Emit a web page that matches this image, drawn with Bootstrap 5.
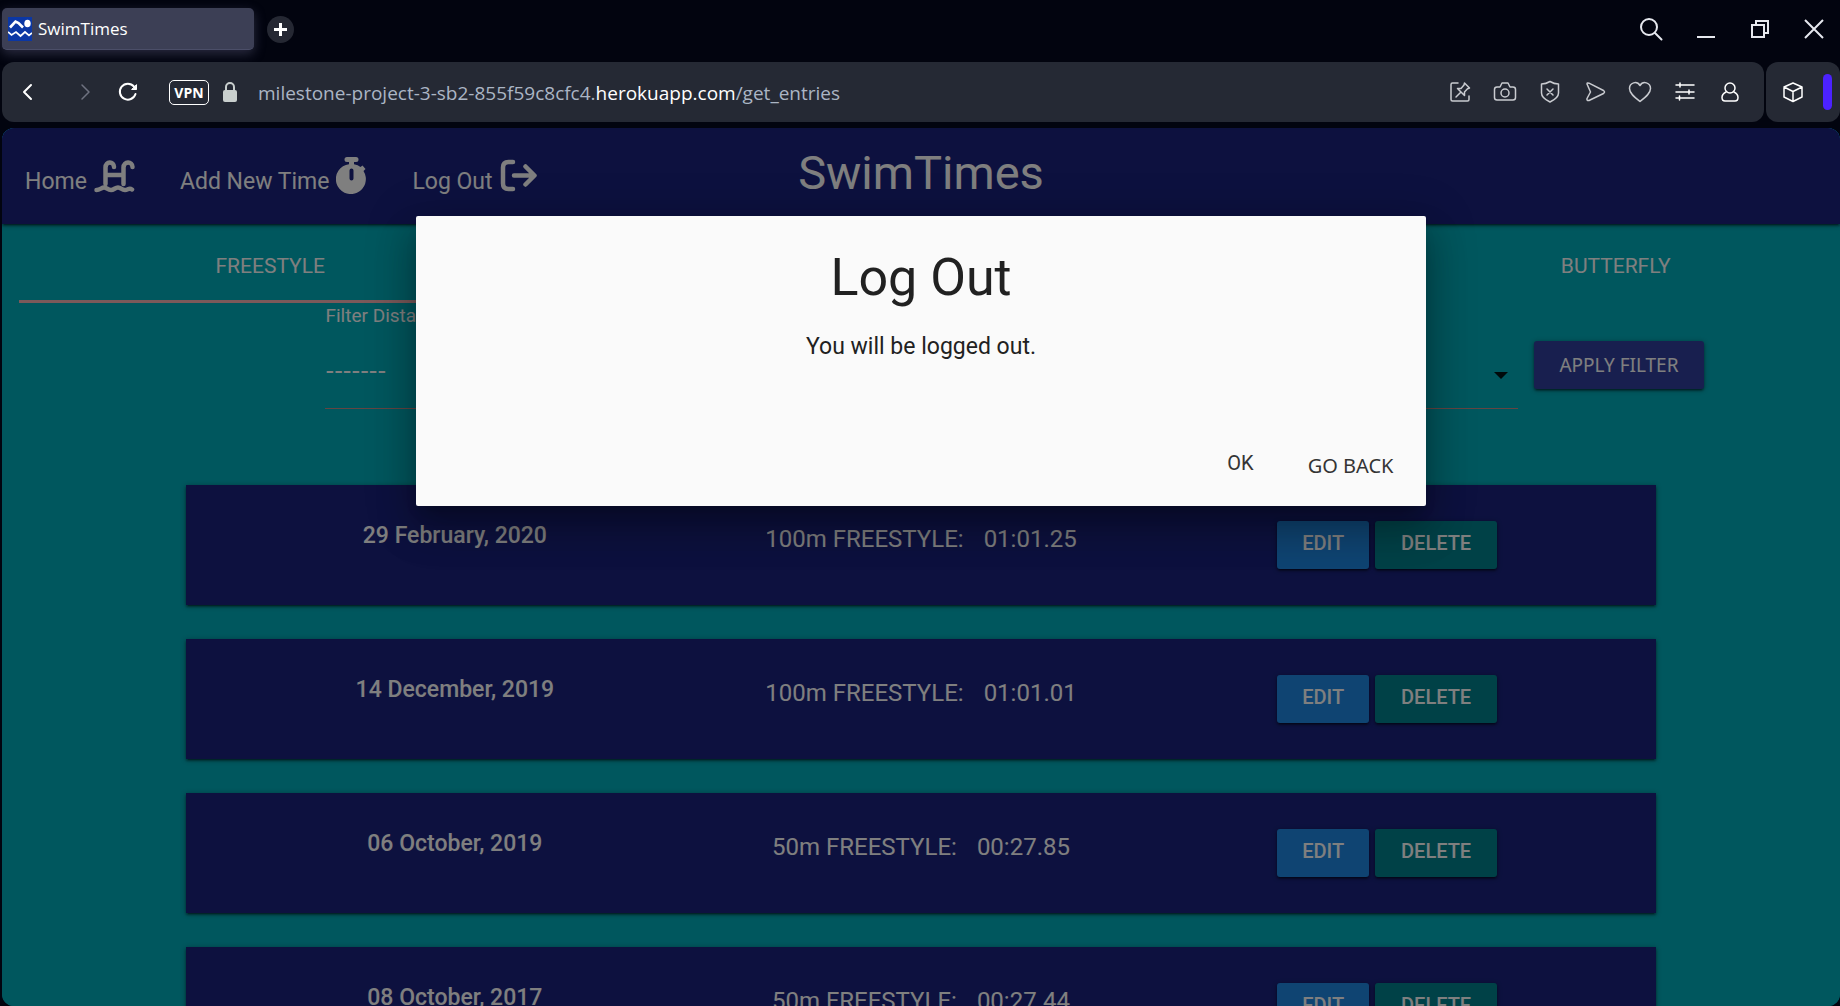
<!DOCTYPE html>
<html lang="en">
<head>
<meta charset="utf-8">
<meta name="viewport" content="width=device-width, initial-scale=1">
<title>SwimTimes</title>
<link href="https://cdn.jsdelivr.net/npm/bootstrap@5.3.0/dist/css/bootstrap.min.css" rel="stylesheet">
<style>
  body { background: #02040f; font-family: "Open Sans", "Noto Sans", sans-serif; }
  button, a { color: inherit; text-decoration: none; }
  svg { display: block; flex: none; }
  .line-icon { fill: none; stroke: currentColor; stroke-width: 1.5; stroke-linecap: round; stroke-linejoin: round; }
  .heavy { stroke-width: 2; }
  .bare { background: none; border: 0; padding: 0; }

  /* browser window */
  .title-bar { height: 62px; padding: 8px 15px 12px 2px; color: #e6e8ee; }
  .page-tab { width: 252px; height: 42px; padding-left: 6px; gap: 6px; border-radius: 5px; background: #3c3f55; border-bottom: 1px solid #4b4e68; box-shadow: 0 4px 12px rgba(90, 92, 125, .45); font-size: 17px; color: #fff; }
  .new-tab { width: 27px; height: 27px; margin-left: 13px; background: #252833; color: #fff; }
  .window-buttons { gap: 32px; }
  .tool-row { gap: 2px; padding-left: 2px; margin-bottom: 6px; }
  .tool-panel { height: 60px; border-radius: 12px; background: #252934; color: #fff; }
  .address-panel { padding: 0 22px 0 16px; }
  .history { gap: 36px; margin-right: 24px; }
  .forward { color: #6f7280; }
  .vpn { width: 40px; height: 25px; margin-left: 31px; border: 1px solid #fff; border-radius: 5px; font-size: 14px; font-weight: 700; line-height: 24px; }
  .lock { margin-left: 14px; color: #c9cfce; }
  .address { margin-left: 21px; padding-top: 2px; font-size: 19px; color: #abb5c4; }
  .address b { font-weight: 400; color: #fff; }
  .tool-icons { gap: 21px; color: #c9cbd0; }
  .side-panel { width: 74px; padding: 0 8px 0 15px; }
  .side-handle { width: 9px; height: 36px; border-radius: 5px; background: #4c22ff; }

  /* site */
  .site { margin-left: 2px; border-radius: 12px; background: #00aebc; font-family: Roboto, sans-serif; color: #fff; min-height: 0; }
  .site-nav { height: 96px; background: #1a237e; box-shadow: 0 2px 2px rgba(0,0,0,.28), 0 3px 1px -2px rgba(0,0,0,.24), 0 1px 5px rgba(0,0,0,.4); position: relative; }
  .nav-side { flex: 1 1 0; padding: 0 23px 30px; gap: 45px; font-size: 23px; line-height: 24px; }
  .nav-side a { gap: 7px; }
  .site-name { font-size: 47px; line-height: 90px; }
  .stroke-tabs { height: 76px; padding: 30px 0 0 44px; font-size: 21px; line-height: 24px; }
  .tab-mark { width: 25%; height: 3px; margin-left: 17px; background: #f6b2b5; }
  .filter { gap: 16px; padding: 0 7.4% 0 17.6%; margin-bottom: 76px; }
  .filter label { font-size: 19px; line-height: 26px; }
  .distance { margin-top: 10px; }
  .distance select { appearance: none; width: 100%; height: 70px; padding: 0 0 6px; border: 0; border-bottom: 1px solid #c88a84; border-radius: 0; background: none; color: #fff; font: 24px/28px "DejaVu Sans", sans-serif; }
  .distance::after { content: ""; position: absolute; right: 10px; top: 33px; border: 7px solid transparent; border-top-color: #001416; border-bottom: 0; }
  .raised { height: 48px; border: 0; border-radius: 3px; color: #fff; box-shadow: 0 2px 2px rgba(0,0,0,.28), 0 3px 1px -2px rgba(0,0,0,.24), 0 1px 5px rgba(0,0,0,.4); }
  .apply { width: 170px; margin-top: 38px; background: #303f9f; font-family: "Noto Sans", sans-serif; font-size: 19px; }
  .entries { width: 80%; }
  .entry { padding: 36px; margin-bottom: 34px; background: #1a237e; font-size: 24px; line-height: 24px; box-shadow: 0 2px 2px rgba(0,0,0,.28), 0 3px 1px -2px rgba(0,0,0,.24), 0 1px 5px rgba(0,0,0,.4); }
  .entry-date { padding-top: 3px; font-size: 23px; font-weight: 500; }
  .entry-time { padding-top: 6px; gap: 20px; }
  .entry-tools { gap: 6px; }
  .entry-tools .raised { padding: 0 0 4px; font-size: 20px; font-weight: 500; }
  .edit { width: 92px; background: #1e88e5; }
  .remove { width: 122px; background: #00838f; }

  /* dialog */
  .shade { position: absolute; inset: 0; background: rgba(0,0,0,.5); padding-top: 88px; }
  .dialog-box { width: 55%; padding: 32px 17px 22px; border-radius: 2px; background: #fafafa; color: #212121; box-shadow: 0 24px 38px 3px rgba(0,0,0,.2), 0 9px 46px 8px rgba(0,0,0,.18), 0 11px 15px -7px rgba(0,0,0,.2); }
  .dialog-box h4 { margin: 0 0 24px; font-size: 52px; line-height: 60px; font-weight: 400; }
  .dialog-box p { margin: 0 0 83px; font-size: 23px; line-height: 30px; }
  .dialog-tools { gap: 22px; font-size: 20px; line-height: 36px; color: #343434; }
  .go-back { margin-top: 3px; font-family: "Noto Sans", sans-serif; }
</style>
</head>
<body class="vh-100 overflow-hidden d-flex flex-column">

<header class="title-bar d-flex align-items-center">
  <div class="page-tab d-flex align-items-center">
    <svg width="24" height="24" viewBox="0 0 24 24"><path fill="#0b37a4" d="M0 0h24v24H0z"/><g fill="none" stroke="#fff"><path d="M2 10.500 7.500 4.500l3 1.500 4.500 4.500" stroke-width="2.600"/><path d="m0 15 3.500 3L8 15l4.500 4L17 15l4 3.500 3-2.500" stroke-width="1.700"/></g><ellipse cx="19.500" cy="6.500" rx="3.200" ry="3.800" fill="#fff"/></svg>
    <span>SwimTimes</span>
  </div>
  <button class="new-tab bare rounded-circle d-flex align-items-center justify-content-center" aria-label="New tab"><svg width="13" height="13" viewBox="0 0 13 13" stroke="currentColor" stroke-width="3"><path d="M6.500 0v13M0 6.500h13"/></svg></button>
  <div class="window-buttons d-flex align-items-center ms-auto">
    <button class="bare text-reset" aria-label="Search"><svg class="line-icon heavy" width="24" height="24" viewBox="0 0 24 24"><circle cx="10" cy="10" r="8"/><path d="m16 16 6.500 6.500"/></svg></button>
    <button class="bare text-reset" aria-label="Minimize"><svg width="22" height="22" viewBox="0 0 22 22" stroke="currentColor" stroke-width="2"><path d="M2 19h18"/></svg></button>
    <button class="bare text-reset" aria-label="Restore"><svg width="22" height="22" viewBox="0 0 22 22" fill="none" stroke="currentColor" stroke-width="2"><path d="M3 7h12v12H3zM7 7V3h12v12h-4"/></svg></button>
    <button class="bare text-reset" aria-label="Close"><svg width="22" height="22" viewBox="0 0 22 22" stroke="currentColor" stroke-width="2"><path d="m2 2 18 18M20 2 2 20"/></svg></button>
  </div>
</header>

<div class="tool-row d-flex">
  <div class="tool-panel address-panel flex-grow-1 d-flex align-items-center">
    <div class="history d-flex">
      <button class="bare" aria-label="Back"><svg class="line-icon heavy" width="20" height="20" viewBox="0 0 20 20"><path d="m13 3-7 7 7 7"/></svg></button>
      <button class="bare forward" aria-label="Forward"><svg class="line-icon" width="20" height="20" viewBox="0 0 20 20"><path d="m8 3 7 7-7 7"/></svg></button>
    </div>
    <button class="bare" aria-label="Reload"><svg class="line-icon heavy" width="20" height="20" viewBox="0 0 20 20"><path d="M17.500 12A8 8 0 1 1 16 4.500l2 2"/><path d="M18.500 3v4.500H14z" fill="currentColor" stroke-width="1"/></svg></button>
    <div class="vpn text-center">VPN</div>
    <svg class="lock" width="14" height="22" viewBox="0 0 14 22"><path d="M3 10V6a4 4 0 0 1 8 0v4" fill="none" stroke="currentColor" stroke-width="2"/><rect y="9" width="14" height="12" rx="2" fill="currentColor"/></svg>
    <div class="address text-nowrap">milestone-project-3-sb2-855f59c8cfc4.<b>herokuapp.com</b>/get_entries</div>
    <div class="tool-icons d-flex align-items-center ms-auto">
      <button class="bare" aria-label="Pin"><svg class="line-icon" width="24" height="24" viewBox="0 0 24 24"><path d="M10 3H4.500Q3 3 3 4.500v15Q3 21 4.500 21h15q1.500 0 1.500-1.500V16"/><path d="m16.500 3 5 5-2 .800-3 3.200v3.500l-7-7H13l3-3.500zM12.500 12.500 8 17"/></svg></button>
      <button class="bare" aria-label="Snapshot"><svg class="line-icon" width="24" height="24" viewBox="0 0 24 24"><path d="M4 7h3l2-4h6l2 4h3q2.500 0 2.500 2.500v8Q22.500 20 20 20H4q-2.500 0-2.500-2.500v-8Q1.500 7 4 7z"/><circle cx="12" cy="13" r="4"/></svg></button>
      <button class="bare" aria-label="Tracker shield"><svg class="line-icon" width="24" height="24" viewBox="0 0 24 24"><path d="M12 1.500Q16 4 20.500 4v9q0 5-8.500 9-8.500-4-8.500-9V4Q8 4 12 1.500zM9 9l6 6M15 9l-6 6"/></svg></button>
      <button class="bare" aria-label="Send"><svg class="line-icon" width="24" height="24" viewBox="0 0 24 24"><path d="M4 4q0-1.500 2-.8L20.500 10.500q2 1.500 0 3L6 20.500q-2.500.5-2-2L7.500 12 4 4z"/></svg></button>
      <button class="bare" aria-label="Favourite"><svg class="line-icon" width="24" height="24" viewBox="0 0 24 24"><path d="M12 21.500C7 17.500 1.500 13.500 1.500 8.500 1.500 2.500 9 .5 12 5.500c3-5 10.500-3 10.500 3 0 5-5.500 9-10.500 13z"/></svg></button>
      <button class="bare text-white" aria-label="Easy setup"><svg class="line-icon" width="24" height="24" viewBox="0 0 24 24"><path d="M3 5h18M3 12h18M3 18h18M7 3v4M16 10v4M6.500 16v4"/></svg></button>
      <button class="bare text-white" aria-label="Profile"><svg class="line-icon" width="24" height="24" viewBox="0 0 24 24"><circle cx="12" cy="8" r="5"/><path d="M8 12q-4 2-4 5.500Q4 21 7 21h10q3 0 3-3.500 0-3.500-4-5.500"/></svg></button>
    </div>
  </div>
  <div class="tool-panel side-panel d-flex align-items-center justify-content-between">
    <button class="bare" aria-label="Extensions"><svg class="line-icon" width="24" height="24" viewBox="0 0 24 24"><path d="m12 3 9 4v10l-9 4.500L3 17V7zM3 7l9 4.500L21 7M12 11.500v10"/></svg></button>
    <div class="side-handle"></div>
  </div>
</div>

<main class="site flex-grow-1 position-relative overflow-hidden">
  <nav class="site-nav d-flex">
    <div class="nav-side d-flex align-items-end">
      <a href="#" class="d-flex align-items-end">Home
        <svg width="41" height="36" viewBox="0 0 41 36" fill="none" stroke="currentColor" stroke-width="4.500" stroke-linecap="round"><path d="M11.500 26V9.500C11.500 3 20 3 20 9M29.500 26V9.500C29.500 3 38.500 3 38.500 9" /><path d="M12 17h17" stroke-linecap="butt"/><path d="M2.500 32c3.500 0 5-2.500 7.500-2.500 3 0 3.500 2.500 7 2.500 3 0 4-2.500 7-2.500s3.500 2.500 7 2.500c3 0 4-2.500 7-.5"/></svg></a>
      <a href="#" class="d-flex align-items-end">Add New Time
        <svg width="31" height="37" viewBox="0 0 31 37" fill="currentColor"><path fill-rule="evenodd" d="M11 0h9a2 2 0 0 1 0 5h-2v2.200q4 .700 6.500 2.800L26.500 8.500 29.500 12 27.500 14a15 15 0 1 1-14.500-6.800V5h-2a2 2 0 0 1 0-5zm4.500 11.500a2 2 0 0 0-2 2v8a2 2 0 0 0 4 0v-8a2 2 0 0 0-2-2z"/></svg></a>
      <a href="#" class="d-flex align-items-end">Log Out
        <svg width="38" height="36" viewBox="0 0 38 36" fill="none" stroke="currentColor" stroke-width="4.500" stroke-linecap="round" stroke-linejoin="round"><path d="M13 4H8.500Q3 4 3 9.500v16Q3 31 8.500 31H13M14 17.500h20M25.500 8.500l9 9-9 9"/></svg></a>
    </div>
    <a href="#" class="site-name">SwimTimes</a>
    <div class="nav-side"></div>
  </nav>

  <div class="stroke-tabs">
    <div class="row g-0 text-center">
      <a href="#" class="col-3">FREESTYLE</a>
      <a href="#" class="col-3 offset-6">BUTTERFLY</a>
    </div>
  </div>
  <div class="tab-mark"></div>

  <form class="filter d-flex align-items-start">
    <div class="flex-grow-1">
      <label class="d-block" for="distance">Filter Distance</label>
      <div class="distance position-relative"><select id="distance"><option>-------</option></select></div>
    </div>
    <button type="button" class="raised apply">APPLY FILTER</button>
  </form>

  <section class="entries mx-auto">
    <article class="entry"><div class="row g-0">
      <div class="col-4 entry-date text-center">29 February, 2020</div>
      <div class="col-4 entry-time d-flex justify-content-center"><span>100m FREESTYLE:</span><span>01:01.25</span></div>
      <div class="col-4 entry-tools d-flex justify-content-center"><button class="raised edit">EDIT</button><button class="raised remove">DELETE</button></div>
    </div></article>
    <article class="entry"><div class="row g-0">
      <div class="col-4 entry-date text-center">14 December, 2019</div>
      <div class="col-4 entry-time d-flex justify-content-center"><span>100m FREESTYLE:</span><span>01:01.01</span></div>
      <div class="col-4 entry-tools d-flex justify-content-center"><button class="raised edit">EDIT</button><button class="raised remove">DELETE</button></div>
    </div></article>
    <article class="entry"><div class="row g-0">
      <div class="col-4 entry-date text-center">06 October, 2019</div>
      <div class="col-4 entry-time d-flex justify-content-center"><span>50m FREESTYLE:</span><span>00:27.85</span></div>
      <div class="col-4 entry-tools d-flex justify-content-center"><button class="raised edit">EDIT</button><button class="raised remove">DELETE</button></div>
    </div></article>
    <article class="entry"><div class="row g-0">
      <div class="col-4 entry-date text-center">08 October, 2017</div>
      <div class="col-4 entry-time d-flex justify-content-center"><span>50m FREESTYLE:</span><span>00:27.44</span></div>
      <div class="col-4 entry-tools d-flex justify-content-center"><button class="raised edit">EDIT</button><button class="raised remove">DELETE</button></div>
    </div></article>
  </section>

  <div class="shade">
    <div class="dialog-box mx-auto" role="dialog" aria-labelledby="dialog-title">
      <h4 id="dialog-title" class="text-center">Log Out</h4>
      <p class="text-center">You will be logged out.</p>
      <div class="dialog-tools d-flex align-items-start justify-content-end">
        <button class="bare px-3">OK</button>
        <button class="bare px-3 go-back">GO BACK</button>
      </div>
    </div>
  </div>
</main>

<script src="https://cdn.jsdelivr.net/npm/bootstrap@5.3.0/dist/js/bootstrap.bundle.min.js"></script>
</body>
</html>
